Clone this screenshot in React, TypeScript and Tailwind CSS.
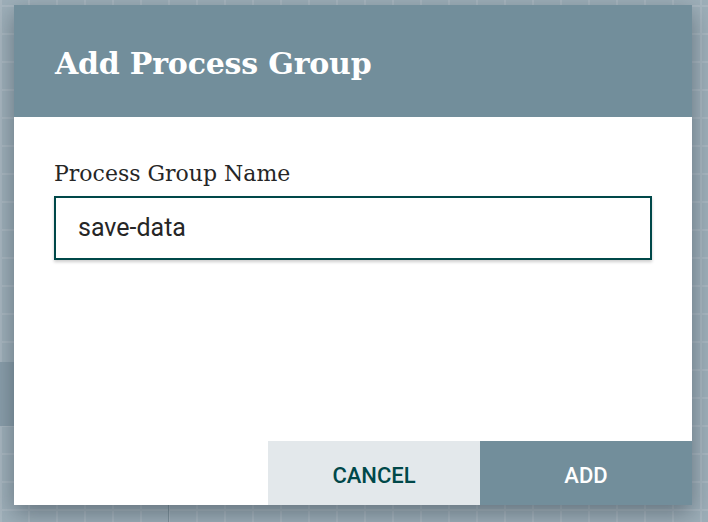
export default function App() {
  return (
    <div className="relative h-[522px] w-[708px] overflow-hidden bg-[#9eafb9] bg-[linear-gradient(to_right,#a9b7c0_2px,transparent_2px),linear-gradient(to_bottom,#a9b7c0_2px,transparent_2px)] bg-[size:28px_28px] bg-[position:0_5px]">
      {/* canvas components peeking out behind the dialog */}
      <div className="absolute left-[-60px] top-[362px] h-[64px] w-[200px] bg-[#8a9eaa]" />
      <div className="absolute left-[168px] top-[505px] h-[40px] w-[1px] bg-[#7f929c]" />

      <div className="relative ml-[14px] mt-[5px] flex h-[500px] w-[678px] flex-col bg-white shadow-[0_8px_22px_rgba(30,45,55,0.45)]">
        <div className="flex h-[112px] shrink-0 items-center bg-[#728e9b] px-[41px]">
          <h1 className="pt-[4px] font-['DejaVu_Serif',serif] text-[30px] font-bold tracking-[-0.2px] text-white">
            Add Process Group
          </h1>
        </div>

        <div className="flex flex-1 flex-col px-[40px] pt-[44px]">
          <label className="font-['DejaVu_Serif',serif] text-[22px] leading-[26px] text-[#262626]">
            Process Group Name
          </label>
          <div className="mt-[9px] flex h-[64px] items-center border-2 border-[#004849] px-[22px] shadow-[0_2px_3px_rgba(0,0,0,0.2)]">
            <span className="font-['Roboto',sans-serif] text-[25px] text-[#262626]">save-data</span>
          </div>
        </div>

        <div className="flex h-[64px] shrink-0 justify-end">
          <button className="flex w-[212px] items-center justify-center bg-[#e3e8eb] pt-[4px] font-['Roboto',sans-serif] text-[22px] font-medium text-[#004849]">
            CANCEL
          </button>
          <button className="flex w-[212px] items-center justify-center bg-[#728e9b] pt-[4px] font-['Roboto',sans-serif] text-[22px] font-medium text-white">
            ADD
          </button>
        </div>
      </div>
    </div>
  );
}
